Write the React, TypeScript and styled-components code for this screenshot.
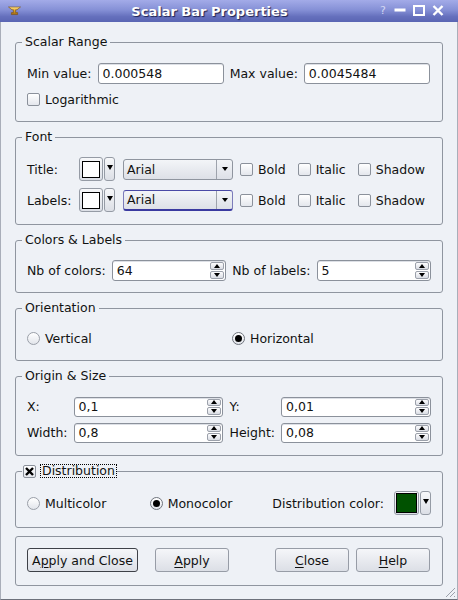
import React from "react";
import styled, { createGlobalStyle, css } from "styled-components";

const Global = createGlobalStyle`
  html, body { margin: 0; padding: 0; background: #eef1f6; }
  body {
    font-family: "DejaVu Sans", "Liberation Sans", sans-serif;
    font-size: 12.5px;
    color: #111;
  }
  * { box-sizing: border-box; }
`;

const Window = styled.div`
  width: 458px;
  height: 600px;
  display: flex;
  flex-direction: column;
  position: relative;
  overflow: hidden;
`;

const TitleBar = styled.div`
  height: 22px;
  flex: none;
  display: flex;
  align-items: center;
  padding: 0 14px 0 8px;
  background: linear-gradient(#a3abe8 0%, #8590d6 45%, #6570bd 75%, #5a65b3 100%);
`;

const TitleText = styled.div`
  flex: 1;
  text-align: center;
  padding-left: 18px;
  font-weight: bold;
  font-size: 13px;
  color: #fff;
  text-shadow: 1px 1px 1px #1d2250;
  white-space: nowrap;
`;

const TitleControls = styled.div`
  display: flex;
  align-items: center;
  gap: 7px;
`;

const HelpGlyph = styled.span`
  width: 7px;
  font-size: 11px;
  color: #d3d7f2;
  line-height: 12px;
`;

const Body = styled.div`
  flex: 1;
  background: #eef1f6;
  border-left: 1px solid #a9aeb9;
  border-right: 1px solid #a9aeb9;
  border-bottom: 1px solid #6d717b;
  padding: 13px 14px 0 14px;
  display: flex;
  flex-direction: column;
  gap: 8px;
`;

const Group = styled.fieldset`
  margin: 0;
  padding: 0;
  min-width: 0;
  border: 1px solid #8f959f;
  border-radius: 3px;
`;

const Legend = styled.legend<{ $pad?: string }>`
  margin-left: 6px;
  padding: ${(p) => p.$pad ?? "0 3px"};
  line-height: 14px;
  height: 14px;
`;

const LegendInner = styled.span`
  display: inline-flex;
  align-items: center;
  gap: 4px;
  height: 14px;
`;

const GroupBody = styled.div<{ $gap?: number; $pb?: number; $pr?: number }>`
  padding: 13px ${(p) => p.$pr ?? 11}px ${(p) => p.$pb ?? 11}px 11px;
  display: flex;
  flex-direction: column;
  gap: ${(p) => p.$gap ?? 4}px;
`;

const PairGrid = styled.div<{ $h?: number; $rowGap?: number }>`
  display: grid;
  grid-template-columns: auto 1fr auto 1fr;
  grid-auto-rows: ${(p) => p.$h ?? 22}px;
  column-gap: 6px;
  row-gap: ${(p) => p.$rowGap ?? 0}px;
  align-items: center;
`;

const Label = styled.span`
  white-space: nowrap;
`;

const LineEdit = styled.input`
  font: inherit;
  color: #111;
  height: 21px;
  min-width: 0;
  width: 100%;
  margin: 0;
  padding: 0 4px;
  background: #fff;
  border: 1px solid #8b919b;
  border-radius: 3px;
  box-shadow: inset 0 1px 0 #dde0e6;
  outline: none;
`;

const CheckItem = styled.span`
  display: inline-flex;
  align-items: center;
  gap: 5px;
  white-space: nowrap;
`;

const Box = styled.span`
  width: 13px;
  height: 13px;
  flex: none;
  display: inline-flex;
  align-items: center;
  justify-content: center;
  border: 1px solid #8b919b;
  border-radius: 2px;
  background: linear-gradient(#ffffff, #e4e7ed);
`;

const Round = styled.span<{ $on?: boolean }>`
  width: 13px;
  height: 13px;
  flex: none;
  border-radius: 50%;
  display: inline-flex;
  align-items: center;
  justify-content: center;
  border: 1px solid ${(p) => (p.$on ? "#6f747d" : "#9a9fa8")};
  background: linear-gradient(#ffffff, #e2e5eb);
`;

const Dot = styled.span`
  width: 7px;
  height: 7px;
  border-radius: 50%;
  background: #000;
`;

const FocusText = styled.span`
  border: 1px dotted #000;
  padding: 0 1px;
  line-height: 12px;
  height: 14px;
  display: inline-flex;
  align-items: center;
`;

const Row = styled.div<{ $h?: number }>`
  display: flex;
  align-items: center;
  height: ${(p) => p.$h ?? 24}px;
`;

const RowLabel = styled.span<{ $w: number }>`
  width: ${(p) => p.$w}px;
  flex: none;
`;

const Picker = styled.div`
  display: flex;
  gap: 1px;
  flex: none;
`;

const gradBtn = css`
  border: 1px solid #959ba5;
  border-radius: 3px;
  background: linear-gradient(#f7f8fa, #dcdfe6);
`;

const SwatchButton = styled.span<{ $w: number; $h: number }>`
  ${gradBtn};
  width: ${(p) => p.$w}px;
  height: ${(p) => p.$h}px;
  display: flex;
  align-items: center;
  justify-content: center;
`;

const Swatch = styled.span<{ $c: string; $w: number; $h: number }>`
  width: ${(p) => p.$w}px;
  height: ${(p) => p.$h}px;
  background: ${(p) => p.$c};
  border: 1px solid #000;
`;

const PickArrow = styled.span<{ $h: number }>`
  ${gradBtn};
  width: 11px;
  height: ${(p) => p.$h}px;
  display: flex;
  align-items: center;
  justify-content: center;
  padding-bottom: 3px;
`;

const Tri = styled.span<{ $up?: boolean; $w?: number; $h?: number }>`
  width: 0;
  height: 0;
  border-left: ${(p) => p.$w ?? 3.5}px solid transparent;
  border-right: ${(p) => p.$w ?? 3.5}px solid transparent;
  ${(p) =>
    p.$up
      ? css`border-bottom: ${p.$h ?? 4}px solid #000;`
      : css`border-top: ${p.$h ?? 4}px solid #000;`}
`;

const Combo = styled.div<{ $focus?: boolean }>`
  width: 110px;
  height: 21px;
  flex: none;
  margin-left: 8px;
  display: flex;
  align-items: stretch;
  border: 1px solid #8f959f;
  border-radius: 3px;
  background: linear-gradient(#f3f5f8, #dde0e7);
  ${(p) =>
    p.$focus &&
    css`
      border-color: #4a4aa6 #7c7cba #3a3aa0 #7c7cba;
      border-bottom-width: 2px;
    `}
`;

const ComboText = styled.span`
  flex: 1;
  padding-left: 3px;
  display: flex;
  align-items: center;
`;

const ComboArrow = styled.span`
  width: 16px;
  border-left: 1px solid #9ea3ac;
  display: flex;
  align-items: center;
  justify-content: center;
`;

const Checks = styled.div`
  display: flex;
  align-items: center;
  gap: 12px;
  margin-left: 7px;
`;

const SpinBox = styled.div<{ $h?: number }>`
  height: ${(p) => p.$h ?? 21}px;
  min-width: 0;
  display: flex;
  background: #fff;
  border: 1px solid #8b919b;
  border-radius: 3px;
  box-shadow: inset 0 1px 0 #dde0e6;
`;

const SpinText = styled.span`
  flex: 1;
  padding-left: 4px;
  display: flex;
  align-items: center;
`;

const SpinArrows = styled.div`
  width: 15px;
  display: flex;
  flex-direction: column;
  gap: 1px;
  padding: 1px 1px 1px 0;
`;

const SpinBtn = styled.span`
  flex: 1;
  display: flex;
  align-items: center;
  justify-content: center;
  border: 1px solid #9ba0aa;
  border-radius: 2px;
  background: linear-gradient(#fdfdfe, #dadde4);
`;

const TwoCols = styled.div`
  display: grid;
  grid-template-columns: 1fr 1fr;
  column-gap: 6px;
  align-items: center;
  height: 21px;
`;

const DistRow = styled.div`
  display: grid;
  grid-template-columns: 1fr 1fr auto;
  align-items: center;
  height: 24px;
`;

const ColorField = styled.div`
  display: flex;
  align-items: center;
  gap: 10px;
`;

const ButtonFrame = styled.div`
  border: 1px solid #8f959f;
  border-radius: 3px;
  padding: 11px 12px 13px 11px;
  display: flex;
  align-items: center;
`;

const Button = styled.button<{ $w: number; $default?: boolean; $ml?: number }>`
  font: inherit;
  color: #111;
  width: ${(p) => p.$w}px;
  height: 24px;
  margin: 0 0 0 ${(p) => p.$ml ?? 0}px;
  padding: 0;
  border: 1px solid ${(p) => (p.$default ? "#3e4148" : "#979ca6")};
  border-radius: 3px;
  background: linear-gradient(#f5f6f9, #dcdfe6);
  flex: none;
  & u { text-decoration-thickness: 1px; text-underline-offset: 2px; }
`;

const Spacer = styled.div`
  flex: 1;
`;

const Grip = styled.svg`
  position: absolute;
  right: 2px;
  bottom: 2px;
`;

function Check({ label }: { label: string }) {
  return (
    <CheckItem>
      <Box />
      {label}
    </CheckItem>
  );
}

function Radio({ label, on }: { label: string; on?: boolean }) {
  return (
    <CheckItem>
      <Round $on={on}>{on && <Dot />}</Round>
      {label}
    </CheckItem>
  );
}

function Spin({ value, h }: { value: string; h?: number }) {
  return (
    <SpinBox $h={h}>
      <SpinText>{value}</SpinText>
      <SpinArrows>
        <SpinBtn>
          <Tri $up $w={3.5} $h={4} />
        </SpinBtn>
        <SpinBtn>
          <Tri $w={3.5} $h={4} />
        </SpinBtn>
      </SpinArrows>
    </SpinBox>
  );
}

function ColorPicker({
  color,
  w,
  h,
  sw,
  sh,
}: {
  color: string;
  w: number;
  h: number;
  sw: number;
  sh: number;
}) {
  return (
    <Picker>
      <SwatchButton $w={w} $h={h}>
        <Swatch $c={color} $w={sw} $h={sh} />
      </SwatchButton>
      <PickArrow $h={h}>
        <Tri $w={3.5} $h={5} />
      </PickArrow>
    </Picker>
  );
}

function FontCombo({ focus }: { focus?: boolean }) {
  return (
    <Combo $focus={focus}>
      <ComboText>Arial</ComboText>
      <ComboArrow>
        <Tri $w={3.5} $h={4} />
      </ComboArrow>
    </Combo>
  );
}

function FontRow({ label, focus }: { label: string; focus?: boolean }) {
  return (
    <Row $h={24}>
      <RowLabel $w={52}>{label}</RowLabel>
      <ColorPicker color="#ffffff" w={24} h={24} sw={18} sh={17} />
      <FontCombo focus={focus} />
      <Checks>
        <Check label="Bold" />
        <Check label="Italic" />
        <Check label="Shadow" />
      </Checks>
    </Row>
  );
}

function WindowIcon() {
  return (
    <svg width="13" height="10" viewBox="0 0 13 10">
      <defs>
        <linearGradient id="gold" x1="0" y1="0" x2="0" y2="1">
          <stop offset="0" stopColor="#ffe38a" />
          <stop offset="0.5" stopColor="#e0a526" />
          <stop offset="1" stopColor="#9c6510" />
        </linearGradient>
      </defs>
      <path
        d="M0.5 1 H12.5 L9 3.8 H7.6 V6.6 H9.6 V8.6 H3.4 V6.6 H5.4 V3.8 H4 Z"
        fill="url(#gold)"
        stroke="#7a4d0c"
        strokeWidth="0.6"
      />
    </svg>
  );
}

export default function App() {
  return (
    <>
      <Global />
      <Window>
        <TitleBar>
          <WindowIcon />
          <TitleText>Scalar Bar Properties</TitleText>
          <TitleControls>
            <HelpGlyph>?</HelpGlyph>
            <svg width="12" height="12" viewBox="0 0 12 12">
              <rect x="0.5" y="3.5" width="11" height="3" fill="#fff" />
            </svg>
            <svg width="12" height="12" viewBox="0 0 12 12">
              <rect x="1" y="1" width="10" height="9" fill="none" stroke="#fff" strokeWidth="2" />
            </svg>
            <svg width="12" height="12" viewBox="0 0 12 12">
              <path d="M1.5 1 L10.5 10 M10.5 1 L1.5 10" stroke="#fff" strokeWidth="2.4" />
            </svg>
          </TitleControls>
        </TitleBar>

        <Body>
          <Group>
            <Legend>Scalar Range</Legend>
            <GroupBody $gap={4} $pr={12}>
              <PairGrid $h={22}>
                <Label>Min value:</Label>
                <LineEdit readOnly defaultValue="0.000548" />
                <Label>Max value:</Label>
                <LineEdit readOnly defaultValue="0.0045484" />
              </PairGrid>
              <Row $h={22}>
                <Check label="Logarithmic" />
              </Row>
            </GroupBody>
          </Group>

          <Group>
            <Legend>Font</Legend>
            <GroupBody $gap={7} $pb={12}>
              <FontRow label="Title:" />
              <FontRow label="Labels:" focus />
            </GroupBody>
          </Group>

          <Group>
            <Legend>Colors &amp; Labels</Legend>
            <GroupBody>
              <PairGrid $h={21}>
                <Label>Nb of colors:</Label>
                <Spin value="64" />
                <Label>Nb of labels:</Label>
                <Spin value="5" />
              </PairGrid>
            </GroupBody>
          </Group>

          <Group>
            <Legend>Orientation</Legend>
            <GroupBody>
              <TwoCols>
                <Radio label="Vertical" />
                <Radio label="Horizontal" on />
              </TwoCols>
            </GroupBody>
          </Group>

          <Group>
            <Legend>Origin &amp; Size</Legend>
            <GroupBody $pb={12}>
              <PairGrid $h={21} $rowGap={5}>
                <Label>X:</Label>
                <Spin value="0,1" h={20} />
                <Label>Y:</Label>
                <Spin value="0,01" h={20} />
                <Label>Width:</Label>
                <Spin value="0,8" h={20} />
                <Label>Height:</Label>
                <Spin value="0,08" h={20} />
              </PairGrid>
            </GroupBody>
          </Group>

          <Group>
            <Legend $pad="0 0 0 1px">
              <LegendInner>
                <Box>
                  <svg width="9" height="9" viewBox="0 0 9 9">
                    <path d="M1 1 L8 8 M8 1 L1 8" stroke="#000" strokeWidth="2.4" />
                  </svg>
                </Box>
                <FocusText>Distribution</FocusText>
              </LegendInner>
            </Legend>
            <GroupBody $pb={12}>
              <DistRow>
                <Radio label="Multicolor" />
                <Radio label="Monocolor" on />
                <ColorField>
                  <Label>Distribution color:</Label>
                  <ColorPicker color="#005200" w={25} h={24} sw={21} sh={20} />
                </ColorField>
              </DistRow>
            </GroupBody>
          </Group>

          <ButtonFrame>
            <Button $w={111} $default>
              A<u>p</u>ply and Close
            </Button>
            <Button $w={74} $ml={17}>
              <u>A</u>pply
            </Button>
            <Spacer />
            <Button $w={74}>
              <u>C</u>lose
            </Button>
            <Button $w={74} $ml={7}>
              <u>H</u>elp
            </Button>
          </ButtonFrame>
        </Body>

        <Grip width="12" height="12" viewBox="0 0 12 12">
          <path d="M11 2 L2 11 M11 6 L6 11 M11 10 L10 11" stroke="#9ca1ab" strokeWidth="1" />
        </Grip>
      </Window>
    </>
  );
}
